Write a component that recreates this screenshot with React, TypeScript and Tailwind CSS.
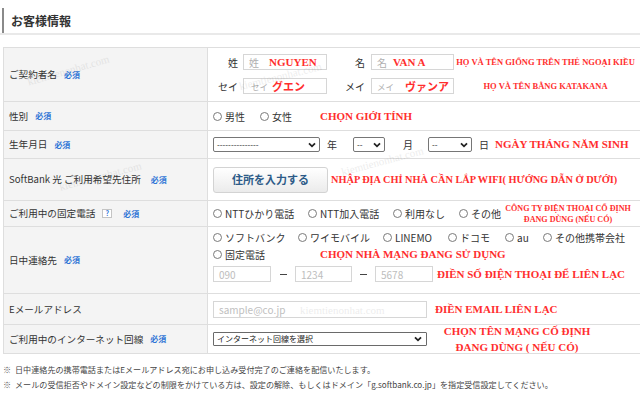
import React from "react";

const redSerif =
  "font-['Liberation_Serif','Times_New_Roman',serif] font-bold text-[#ff2e2e] whitespace-nowrap";

function Req() {
  return <span className="ml-[7px] text-[8px] font-bold text-[#2f74d6]">必須</span>;
}

function Radio({ label, className = "" }: { label: string; className?: string }) {
  return (
    <span className={"flex items-center whitespace-nowrap shrink-0 " + className}>
      <span className="w-[9px] h-[9px] rounded-full border border-[#7a7a7a] bg-white mr-[3px] shrink-0" />
      <span>{label}</span>
    </span>
  );
}

function Chevron() {
  return (
    <svg width="8" height="6" viewBox="0 0 8 6" className="shrink-0">
      <path d="M1 1.3 L4 4.3 L7 1.3" stroke="#222" strokeWidth="1.8" fill="none" />
    </svg>
  );
}

function Label({ children }: { children: React.ReactNode }) {
  return (
    <div className="w-[204px] shrink-0 bg-[#f4f4f4] border-r border-[#dedede] flex items-center pl-[5px] text-[9.6px] text-[#333] whitespace-nowrap">
      {children}
    </div>
  );
}

function Mark({ className }: { className: string }) {
  return (
    <span
      className={
        "absolute font-['Liberation_Serif',serif] text-[11px] text-[#000] opacity-[0.07] whitespace-nowrap pointer-events-none " +
        className
      }
    >
      kiemtienonhat.com
    </span>
  );
}

export default function App() {
  return (
    <div className="relative w-[640px] h-[400px] overflow-hidden bg-white text-[#333] font-['Noto_Sans_CJK_JP','Noto_Sans',sans-serif]">
      {/* Header */}
      <div className="pt-[8px]">
        <div className="ml-[2px] h-[25px] border-l-2 border-[#8a8a8a] pl-[7px] flex items-center text-[12px] font-bold text-[#333]">
          お客様情報
        </div>
        <div className="h-[2px] bg-[#e9e9e9]" />
      </div>

      {/* Table */}
      <div className="mt-[12px] ml-[3px] border-t border-l border-[#dedede]">
        {/* Row 1 */}
        <div className="flex h-[54px] border-b border-[#dedede]">
          <Label>
            ご契約者名
            <Req />
          </Label>
          <div className="flex-1 flex flex-col pt-[6px] gap-[8px] text-[10px]">
            <div className="flex items-center h-[16px]">
              <span className="w-[30px] text-right">姓</span>
              <div className="ml-[5px] w-[84px] h-[16px] border border-[#d6d6d6] bg-white flex items-center px-[5px] whitespace-nowrap overflow-hidden">
                <span className="text-[#b0b0b0]">姓</span>
                <span className={redSerif + " ml-[10px] text-[11px]"}>NGUYEN</span>
              </div>
              <span className="w-[38px] text-right">名</span>
              <div className="ml-[6px] w-[83px] h-[16px] border border-[#d6d6d6] bg-white flex items-center px-[5px] whitespace-nowrap overflow-hidden">
                <span className="text-[#b0b0b0]">名</span>
                <span className={redSerif + " ml-[6px] text-[11px]"}>VAN A</span>
              </div>
              <span className={redSerif + " ml-[1px] w-[181px] text-center text-[8.5px]"}>
                HỌ VÀ TÊN GIỐNG TRÊN THẺ NGOẠI KIỀU
              </span>
            </div>
            <div className="flex items-center h-[16px]">
              <span className="w-[30px] text-right">セイ</span>
              <div className="ml-[5px] w-[84px] h-[16px] border border-[#d6d6d6] bg-white flex items-center pl-[7px] whitespace-nowrap overflow-hidden">
                <span className="text-[#b0b0b0] text-[8.5px]">セイ</span>
                <span className="ml-[4px] text-[11px] font-bold text-[#ff2e2e]">グエン</span>
              </div>
              <span className="w-[38px] text-right">メイ</span>
              <div className="ml-[6px] w-[83px] h-[16px] border border-[#d6d6d6] bg-white flex items-center pl-[5px] whitespace-nowrap overflow-hidden">
                <span className="text-[#b0b0b0] text-[8.5px]">メイ</span>
                <span className="ml-[11px] text-[11px] font-bold text-[#ff2e2e]">ヴァンア</span>
              </div>
              <span className={redSerif + " ml-[1px] w-[181px] text-center text-[8.5px]"}>
                HỌ VÀ TÊN BẰNG KATAKANA
              </span>
            </div>
          </div>
        </div>

        {/* Row 2 */}
        <div className="flex h-[29px] border-b border-[#dedede]">
          <Label>
            性別
            <Req />
          </Label>
          <div className="flex-1 pl-[5px] flex items-center text-[10px]">
            <Radio label="男性" className="w-[47px]" />
            <Radio label="女性" className="w-[60px]" />
            <span className={redSerif + " text-[11px]"}>CHỌN GIỚI TÍNH</span>
          </div>
        </div>

        {/* Row 3 */}
        <div className="flex h-[28px] border-b border-[#dedede]">
          <Label>
            生年月日
            <Req />
          </Label>
          <div className="flex-1 pl-[5px] flex items-center text-[10px]">
            <div className="w-[107px] h-[15px] border border-[#767676] rounded-[2px] bg-white flex items-center justify-between px-[3px] text-[8px] text-[#222]">
              <span>---------------</span>
              <Chevron />
            </div>
            <span className="ml-[7px]">年</span>
            <div className="ml-[16px] w-[32px] h-[15px] border border-[#767676] rounded-[2px] bg-white flex items-center justify-between px-[3px] text-[8px] text-[#222]">
              <span>--</span>
              <Chevron />
            </div>
            <span className="ml-[18px]">月</span>
            <div className="ml-[15px] w-[44px] h-[15px] border border-[#767676] rounded-[2px] bg-white flex items-center justify-between px-[3px] text-[8px] text-[#222]">
              <span>--</span>
              <Chevron />
            </div>
            <span className="ml-[7px]">日</span>
            <span className={redSerif + " ml-[6px] text-[11px]"}>NGÀY THÁNG NĂM SINH</span>
          </div>
        </div>

        {/* Row 4 */}
        <div className="flex h-[42px] border-b border-[#dedede]">
          <Label>
            SoftBank 光 ご利用希望先住所
            <span className="ml-[3px]" />
            <Req />
          </Label>
          <div className="flex-1 pl-[5px] flex items-center">
            <div className="w-[115px] h-[26px] rounded-[3px] border border-[#d3d3d3] bg-linear-to-b from-[#ffffff] to-[#ebebeb] flex items-center justify-center text-[11px] font-bold text-[#2d5b88]">
              住所を入力する
            </div>
            <span className={redSerif + " ml-[3px] text-[10.3px]"}>
              NHẬP ĐỊA CHỈ NHÀ CẦN LẮP WIFI( HƯỚNG DẪN Ở DƯỚI)
            </span>
          </div>
        </div>

        {/* Row 5 */}
        <div className="flex h-[26px] border-b border-[#dedede]">
          <Label>
            ご利用中の固定電話
            <span className="ml-[7px] w-[10px] h-[9px] border border-[#c4c4c4] bg-white flex items-center justify-center text-[7px] font-bold text-[#2f74d6] leading-none">
              ?
            </span>
            <span className="ml-[4px]" />
            <Req />
          </Label>
          <div className="flex-1 pl-[5px] flex items-center text-[10px]">
            <Radio label="NTTひかり電話" className="w-[95px]" />
            <Radio label="NTT加入電話" className="w-[85px]" />
            <Radio label="利用なし" className="w-[66px]" />
            <Radio label="その他" className="w-[44px]" />
            <div className={redSerif + " w-[130px] text-center text-[8.1px] leading-[11px]"}>
              <div>CÔNG TY ĐIỆN THOẠI CỐ ĐỊNH</div>
              <div>ĐANG DÙNG (NẾU CÓ)</div>
            </div>
          </div>
        </div>

        {/* Row 6 */}
        <div className="flex h-[67px] border-b border-[#dedede]">
          <Label>
            日中連絡先
            <Req />
          </Label>
          <div className="flex-1 pl-[5px] pt-[3px] flex flex-col text-[10px]">
            <div className="flex items-center h-[14px]">
              <Radio label="ソフトバンク" className="w-[85px]" />
              <Radio label="ワイモバイル" className="w-[85px]" />
              <Radio label="LINEMO" className="w-[65px]" />
              <Radio label="ドコモ" className="w-[57px]" />
              <Radio label="au" className="w-[38px]" />
              <Radio label="その他携帯会社" />
            </div>
            <div className="flex items-center h-[14px] mt-[3px]">
              <Radio label="固定電話" className="w-[107px]" />
              <span className={redSerif + " text-[11px]"}>CHỌN NHÀ MẠNG ĐANG SỬ DỤNG</span>
            </div>
            <div className="flex items-center h-[16px] mt-[5px]">
              <div className="w-[58px] h-[16px] border border-[#d6d6d6] bg-white flex items-center px-[5px] text-[#bdbdbd]">
                090
              </div>
              <span className="ml-[9px] w-[7px] h-[1px] bg-[#444]" />
              <div className="ml-[8px] w-[57px] h-[16px] border border-[#d6d6d6] bg-white flex items-center px-[5px] text-[#bdbdbd]">
                1234
              </div>
              <span className="ml-[8px] w-[7px] h-[1px] bg-[#444]" />
              <div className="ml-[8px] w-[58px] h-[16px] border border-[#d6d6d6] bg-white flex items-center px-[5px] text-[#bdbdbd]">
                5678
              </div>
              <span className={redSerif + " ml-[4px] text-[11px]"}>ĐIỀN SỐ ĐIỆN THOẠI ĐỂ LIÊN LẠC</span>
            </div>
          </div>
        </div>

        {/* Row 7 */}
        <div className="flex h-[31px] border-b border-[#dedede]">
          <Label>Eメールアドレス</Label>
          <div className="flex-1 pl-[5px] flex items-center text-[10px]">
            <div className="w-[214px] h-[17px] border border-[#d6d6d6] bg-white flex items-center px-[5px] text-[#c0c0c0]">
              sample@co.jp
            </div>
            <span className={redSerif + " ml-[8px] text-[11px]"}>ĐIỀN EMAIL LIÊN LẠC</span>
          </div>
        </div>

        {/* Row 8 */}
        <div className="flex h-[29px] border-b border-[#dedede]">
          <Label>
            ご利用中のインターネット回線
            <Req />
          </Label>
          <div className="flex-1 pl-[5px] flex items-center">
            <div className="w-[214px] h-[14px] border border-[#6a6a6a] rounded-[1px] bg-white flex items-center justify-between pl-[3px] pr-[4px] text-[8px] text-[#222]">
              <span>インターネット回線を選択</span>
              <Chevron />
            </div>
            <div className={redSerif + " ml-[10px] w-[160px] text-center text-[11px] leading-[16px]"}>
              <div>CHỌN TÊN MẠNG CỐ ĐỊNH</div>
              <div>ĐANG DÙNG ( NẾU CÓ)</div>
            </div>
          </div>
        </div>
      </div>

      {/* Notes */}
      <div className="mt-[8px] pl-[3px] text-[8.1px] text-[#444] leading-[15px]">
        <div className="flex whitespace-nowrap">
          <span className="w-[12px] shrink-0 text-[#555]">※</span>
          <span>日中連絡先の携帯電話またはEメールアドレス宛にお申し込み受付完了のご連絡を配信いたします。</span>
        </div>
        <div className="flex whitespace-nowrap">
          <span className="w-[12px] shrink-0 text-[#555]">※</span>
          <span>
            メールの受信拒否やドメイン設定などの制限をかけている方は、設定の解除、もしくはドメイン「g.softbank.co.jp」を指定受信設定してください。
          </span>
        </div>
      </div>

      {/* Watermarks */}
      <Mark className="left-[26px] top-[62px] rotate-[-16deg]" />
      <Mark className="left-[238px] top-[68px] rotate-[-14deg]" />
      <Mark className="left-[58px] top-[168px] rotate-[-15deg]" />
      <Mark className="left-[340px] top-[153px] rotate-[-15deg]" />
      <Mark className="left-[300px] top-[302px]" />
    </div>
  );
}
